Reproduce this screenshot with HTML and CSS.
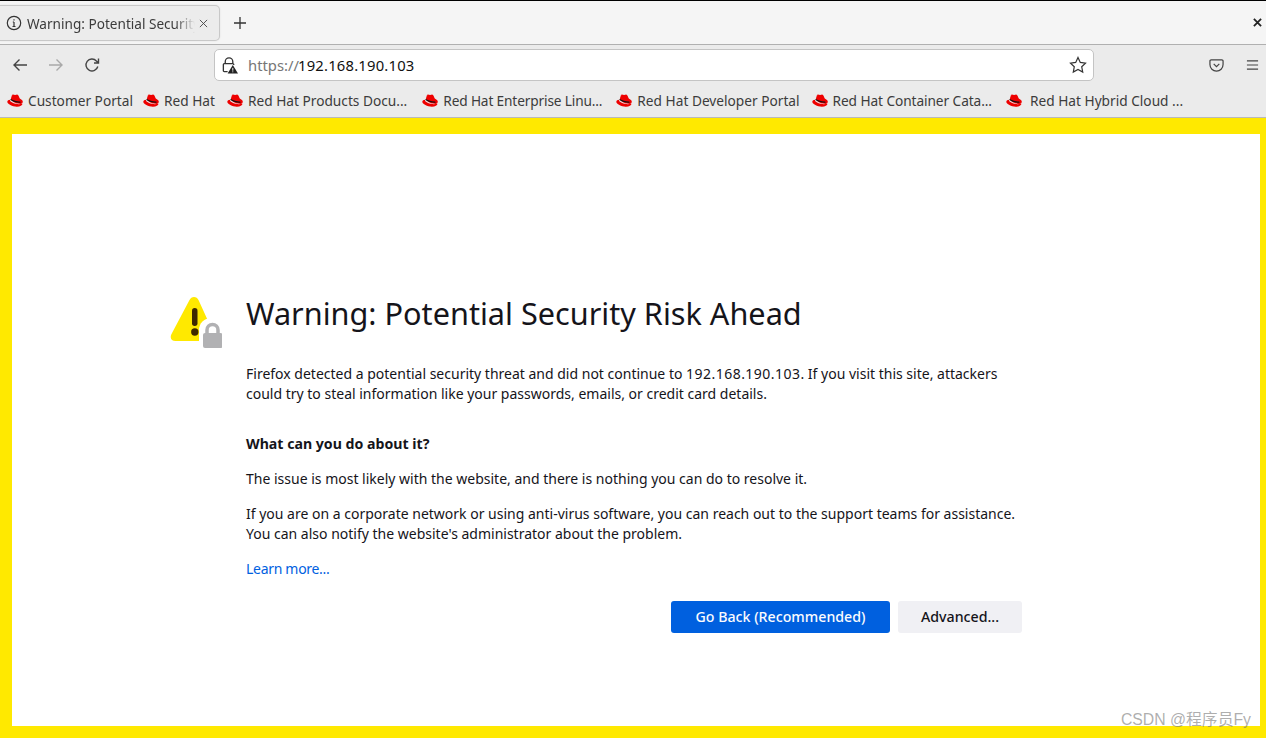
FILE: index.html
```html
<!DOCTYPE html>
<html lang="en">
<head>
    <meta charset="UTF-8">
    <title>Warning: Potential Security Risk Ahead</title>
    <link rel="stylesheet" href="styles.css">
</head>
<body>
    <svg class="sprite" width="0" height="0">
        <symbol id="redhat" viewBox="0 0 16 16">
            <path fill="#e00" d="M5 2.600c.9-.5 1.500.2 2.600.2.9 0 1.500-.5 2.300-.3 1 .3 1.500 2 2 3.700.9.5 3 1.500 3 3 0 1.500-1.500 2.300-3.700 2.300-3.200 0-8.400-2.200-8.400-3.500 0-.3.100-.5.300-.7C1.300 7.400.300 8 .300 9.200c0 2.200 4.700 4.700 9 4.700 3.300 0 5-1.300 5.300-2.800-3 .6-9.600-1-10.400-3.500z" />
            <path fill="#e00" d="M4.600 3 3.500 7c2.500 1.500 6.500 2.600 9 2.300-.3-1.200-.6-2.300-.8-3.200z" />
            <path fill="#111" d="M3.600 6.600c2.800 1.700 6.500 2.700 8.900 2.300l.3 1.100c-2.800.4-7-.8-9.700-2.500z" />
        </symbol>
    </svg>

    <div class="tabbar">
        <div class="tab">
            <svg class="tab-icon" viewBox="0 0 16 16"><circle cx="8" cy="8" r="6.700" /><path d="M8 7v4.500M6.800 7H8M6.500 11.500h3M8 4.200v1.300" /></svg>
            <span class="tab-title">Warning: Potential Security Risk Ahead</span>
            <svg class="tab-close" viewBox="0 0 10 10"><path d="M1 1l8 8M9 1l-8 8" /></svg>
        </div>
        <svg class="new-tab" viewBox="0 0 14 14"><path d="M7 1v12M1 7h12" /></svg>
        <svg class="win-close" viewBox="0 0 10 10"><path d="M1 1l8 8M9 1l-8 8" /></svg>
    </div>

    <div class="navbar">
        <svg class="nav-btn" viewBox="0 0 16 16"><path d="M15 8H2M7.500 2.500 2 8l5.500 5.500" /></svg>
        <svg class="nav-btn disabled" viewBox="0 0 16 16"><path d="M1 8h13M8.500 2.500 14 8l-5.500 5.500" /></svg>
        <svg class="nav-btn" viewBox="0 0 16 16"><path d="M13.800 9.500A6 6 0 1 1 12.400 3.900L14.500 6M14.500 1.500V6H10" /></svg>
        <div class="urlbar">
            <svg class="lock" viewBox="0 0 18 18">
                <path class="lock-outline" d="M4.500 7V5a4 4 0 0 1 8 0v2M7 15.500H3.500a1 1 0 0 1-1-1V8a1 1 0 0 1 1-1h9a1 1 0 0 1 1 1v.5" />
                <path class="lock-warn" d="M12.500 8.500l5.500 9H7z" />
                <path class="lock-mark" d="M12.500 11.500v3M12.500 15.200v1" />
            </svg>
            <span class="url"><span class="url-scheme">https://</span><span class="url-host">192.168.190.103</span></span>
            <svg class="star" viewBox="0 0 18 18"><path d="M9 1.500l2.300 4.900 5.200.7-3.800 3.600 1 5.300L9 13.400l-4.700 2.600 1-5.300-3.800-3.600 5.200-.7z" /></svg>
        </div>
        <div class="nav-right">
            <svg class="pocket" viewBox="0 0 16 16"><path d="M2.300 2h11.400A1.300 1.300 0 0 1 15 3.300V7A7 7 0 0 1 1 7V3.300A1.300 1.300 0 0 1 2.300 2z" /><path d="M5 6.300 8 9.300l3-3" /></svg>
            <svg class="menu" viewBox="0 0 14 12"><path d="M1 1.500h12M1 6h12M1 10.500h12" /></svg>
        </div>
    </div>

    <div class="bookmarks">
        <a class="bookmark b1"><svg><use href="#redhat" /></svg>Customer Portal</a>
        <a class="bookmark b2"><svg><use href="#redhat" /></svg>Red Hat</a>
        <a class="bookmark b3"><svg><use href="#redhat" /></svg>Red Hat Products Docu...</a>
        <a class="bookmark b4"><svg><use href="#redhat" /></svg>Red Hat Enterprise Linu...</a>
        <a class="bookmark b5"><svg><use href="#redhat" /></svg>Red Hat Developer Portal</a>
        <a class="bookmark b6"><svg><use href="#redhat" /></svg>Red Hat Container Cata...</a>
        <a class="bookmark b7"><svg><use href="#redhat" /></svg>Red Hat Hybrid Cloud ...</a>
    </div>

    <div class="page-frame">
        <div class="page">
            <svg class="warn-icon" viewBox="0 0 52 52">
                <path fill="#ffe900" d="M24 1c-2 0-3.500 1-4.500 3L1.500 38c-2 4 0 7 4 7H40c4 0 6-3 4-7L28.500 4c-1-2-2.500-3-4.500-3z" />
                <path fill="#fff" d="M29 52V34a12 12 0 0 1 24 0v18z" />
                <rect x="22" y="12" width="5.500" height="18" rx="2.700" fill="#3e2800" />
                <circle cx="24.800" cy="36" r="3.700" fill="#3e2800" />
                <path fill="none" stroke="#b1b1b3" stroke-width="3.500" d="M37 40v-6a5.500 5.500 0 0 1 11 0v6" />
                <rect x="33" y="37" width="19.500" height="15" rx="2" fill="#b1b1b3" />
            </svg>
            <main class="content">
                <h1>Warning: Potential Security Risk Ahead</h1>
                <p class="intro">Firefox detected a potential security threat and did not continue to <span class="host">192.168.190.103</span>. If you visit this site, attackers could try to steal information like your passwords, emails, or credit card details.</p>
                <h2>What can you do about it?</h2>
                <p>The issue is most likely with the website, and there is nothing you can do to resolve it.</p>
                <p>If you are on a corporate network or using anti-virus software, you can reach out to the support teams for assistance. You can also notify the website's administrator about the problem.</p>
                <p><a class="learn-more" href="#">Learn more...</a></p>
                <div class="actions">
                    <button class="btn primary">Go Back (Recommended)</button>
                    <button class="btn">Advanced...</button>
                </div>
            </main>
        </div>
    </div>

    <div class="watermark">CSDN @程序员Fy</div>
</body>
</html>
```
FILE: styles.css
```css
html, body {
    margin: 0;
    height: 738px;
    overflow: hidden;
}
body {
    font-family: "Noto Sans", "Open Sans", sans-serif;
    display: flex;
    flex-direction: column;
    background: #fff;
    position: relative;
}
.sprite {
    position: absolute;
}
svg {
    flex: none;
}

/* tab strip */
.tabbar {
    height: 43px;
    border-top: 1px solid #000;
    border-bottom: 1px solid #b0b0b0;
    background: #f5f5f5;
    display: flex;
    align-items: center;
    flex: none;
}
.tab {
    width: 220px;
    height: 36px;
    margin-top: 1px;
    box-sizing: border-box;
    background: #ececec;
    border: 1px solid #c8c8c8;
    border-left: none;
    border-radius: 0 5px 5px 0;
    display: flex;
    align-items: center;
    padding-left: 6px;
    box-shadow: 0 0 2px rgba(0,0,0,0.1);
}
.tab-icon {
    width: 16px;
    height: 16px;
    fill: none;
    stroke: #333;
    stroke-width: 1.200;
}
.tab-title {
    margin-left: 5px;
    width: 169px;
    font-size: 13.600px;
    color: #3c3c3c;
    white-space: nowrap;
    overflow: hidden;
    -webkit-mask-image: linear-gradient(to right, #000 148px, transparent 168px);
    mask-image: linear-gradient(to right, #000 148px, transparent 168px);
}
.tab-close {
    width: 9px;
    height: 9px;
    margin-left: 3px;
    fill: none;
    stroke: #444;
    stroke-width: 1;
}
.new-tab {
    width: 14px;
    height: 14px;
    margin-left: 13px;
    fill: none;
    stroke: #333;
    stroke-width: 1.300;
}
.win-close {
    width: 9px;
    height: 9px;
    margin-left: auto;
    margin-right: 4px;
    fill: none;
    stroke: #222;
    stroke-width: 2;
}

/* nav */
.navbar {
    height: 40px;
    background: #ebebeb;
    display: flex;
    align-items: center;
    padding-left: 12px;
    flex: none;
}
.nav-btn {
    width: 16px;
    height: 16px;
    margin-right: 20px;
    fill: none;
    stroke: #444;
    stroke-width: 1.400;
}
.nav-btn.disabled {
    stroke: #a9a9a9;
}
.urlbar {
    width: 880px;
    height: 32px;
    margin-left: 94px;
    box-sizing: border-box;
    background: #fff;
    border: 1px solid #c4c4c4;
    border-radius: 5px;
    display: flex;
    align-items: center;
    padding: 0 6px;
}
.lock {
    width: 17px;
    height: 17px;
    fill: none;
    stroke: #333;
    stroke-width: 1.400;
}
.lock .lock-warn {
    fill: #222;
    stroke: none;
}
.lock .lock-mark {
    stroke: #fff;
    stroke-width: 1;
}
.url {
    margin-left: 10px;
    font-size: 14.800px;
    color: #111;
}
.url-scheme {
    color: #777;
}
.url-host {
    letter-spacing: 0.200px;
    margin-left: -1px;
}
.star {
    width: 18px;
    height: 18px;
    margin-left: auto;
    fill: none;
    stroke: #333;
    stroke-width: 1.200;
}
.nav-right {
    margin-left: auto;
    display: flex;
    align-items: center;
    gap: 22px;
    padding-right: 7px;
}
.pocket {
    width: 15px;
    height: 15px;
    fill: none;
    stroke: #444;
    stroke-width: 1.300;
}
.menu {
    width: 13px;
    height: 12px;
    fill: none;
    stroke: #444;
    stroke-width: 1.200;
}

/* bookmarks */
.bookmarks {
    height: 33px;
    box-sizing: border-box;
    background: #ebebeb;
    border-bottom: 1px solid #b9b9b9;
    display: flex;
    align-items: center;
    padding-left: 7px;
    padding-bottom: 2px;
    flex: none;
}
.bookmark {
    display: flex;
    align-items: center;
    font-size: 13.700px;
    color: #3c3c3c;
    white-space: nowrap;
}
.bookmark svg {
    width: 17px;
    height: 17px;
    margin-right: 4px;
}
.b2 { margin-left: 10px; }
.b3 { margin-left: 12px; }
.b4 { margin-left: 15px; letter-spacing: -0.150px; }
.b5 { margin-left: 14px; }
.b6 { margin-left: 12px; letter-spacing: -0.080px; }
.b7 { margin-left: 14px; }
.b7 svg { margin-right: 7px; }

/* error page */
.page-frame {
    flex: 1;
    background: #ffe900;
    padding: 16px 6px 12px 12px;
    display: flex;
    min-height: 0;
}
.page {
    flex: 1;
    background: #fff;
    display: flex;
    padding: 161px 0 0 158px;
    box-sizing: border-box;
}
.warn-icon {
    width: 52px;
    height: 52px;
    margin-top: 1px;
    margin-right: 24px;
}
.content {
    width: 776px;
    color: #15141a;
    font-size: 14px;
    line-height: 20px;
}
h1 {
    margin: 0 0 32px;
    font-size: 30.650px;
    font-weight: 400;
    line-height: 37px;
}
p {
    margin: 0 0 15px;
}
.intro {
    margin-bottom: 30px;
}
.host {
    letter-spacing: 0.470px;
}
h2 {
    margin: 0 0 15px;
    font-size: 14.150px;
    font-weight: 700;
    line-height: 20px;
}
.learn-more {
    color: #0060df;
    text-decoration: none;
    letter-spacing: -0.300px;
}
.actions {
    display: flex;
    justify-content: flex-end;
    gap: 8px;
    margin-top: 22px;
}
.btn {
    height: 32px;
    width: 124px;
    border: none;
    border-radius: 3px;
    background: #f0f0f4;
    color: #15141a;
    font-family: inherit;
    font-size: 14.200px;
    font-weight: 500;
    padding: 0 0 2px;
}
.btn.primary {
    width: 219px;
    background: #0060df;
    color: #fbfbfe;
}

.watermark {
    position: absolute;
    right: 15px;
    top: 710px;
    font-family: "Liberation Sans", "Noto Sans CJK SC", sans-serif;
    font-size: 15.800px;
    line-height: 20px;
    color: rgba(120,120,120,0.6);
}
```
